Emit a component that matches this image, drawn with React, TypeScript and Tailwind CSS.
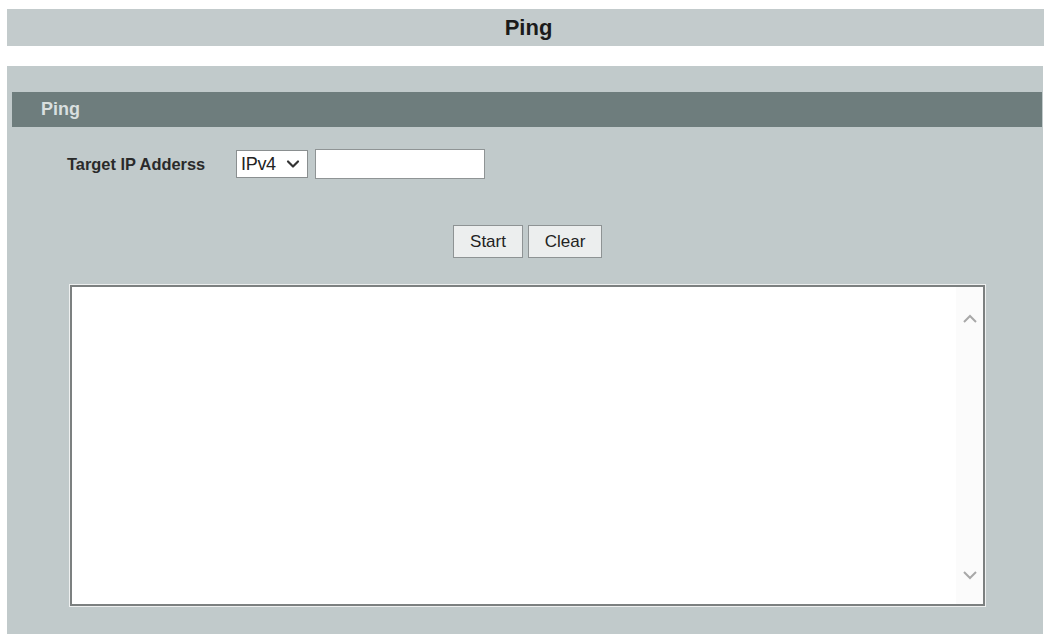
import { ChevronDown } from "lucide-react";

export default function App() {
  return (
    <div className="flex h-[634px] w-[1046px] flex-col overflow-hidden bg-white font-['Liberation_Sans',Arial,sans-serif]">
      <header className="ml-[7px] mr-[2px] mt-[9px] flex h-[37px] shrink-0 items-center justify-center bg-[#c3cbcc]">
        <h1 className="pl-[6px] text-[22px] font-bold text-[#1b1b1b]">Ping</h1>
      </header>

      <main className="ml-[7px] mr-[3px] mt-[20px] flex flex-1 flex-col bg-[#c1cacb] pt-[26px]">
        <div className="ml-[5px] mr-px flex h-[35px] items-center bg-[#6e7d7d] pl-[29px]">
          <span className="text-[18px] font-bold text-[#d9dfdf]">Ping</span>
        </div>

        <div className="mt-[22px] flex h-[30px] items-center pl-[60px]">
          <label className="w-[169px] text-[16.4px] font-bold text-[#2a2a2a]">Target IP Adderss</label>
          <div className="flex h-[28px] w-[72px] items-center justify-between border border-[#8a8f90] bg-white pl-[4px] pr-[4px]">
            <span className="text-[18px] tracking-[-0.3px] text-[#222]">IPv4</span>
            <ChevronDown className="h-[20px] w-[20px] text-[#333]" strokeWidth={2.6} />
          </div>
          <div className="ml-[7px] h-[30px] w-[170px] border border-[#8f9495] bg-white" />
        </div>

        <div className="mt-[46px] flex justify-center gap-[5px] pl-[5px]">
          <button className="h-[33px] w-[70px] border border-[#8e9394] bg-[#eceeee] text-[17px] text-[#222]">
            Start
          </button>
          <button className="h-[33px] w-[74px] border border-[#8e9394] bg-[#eceeee] text-[17px] text-[#222]">
            Clear
          </button>
        </div>

        <div className="ml-[62px] mt-[26px] h-[323px] w-[917px] border border-[#eef0f0] bg-[#eef0f0]">
          <div className="flex h-full w-full border-2 border-[#7c8080] bg-white">
            <div className="flex-1" />
            <div className="flex w-[27px] flex-col items-center justify-between bg-[#fbfbfb] pb-[24px] pt-[27px]">
              <svg width="16" height="10" viewBox="0 0 16 10" fill="none" stroke="#a8a8a8" strokeWidth="2">
                <path d="M2 8 L8 2 L14 8" />
              </svg>
              <svg width="16" height="10" viewBox="0 0 16 10" fill="none" stroke="#a8a8a8" strokeWidth="2">
                <path d="M2 2 L8 8 L14 2" />
              </svg>
            </div>
          </div>
        </div>
      </main>
    </div>
  );
}
